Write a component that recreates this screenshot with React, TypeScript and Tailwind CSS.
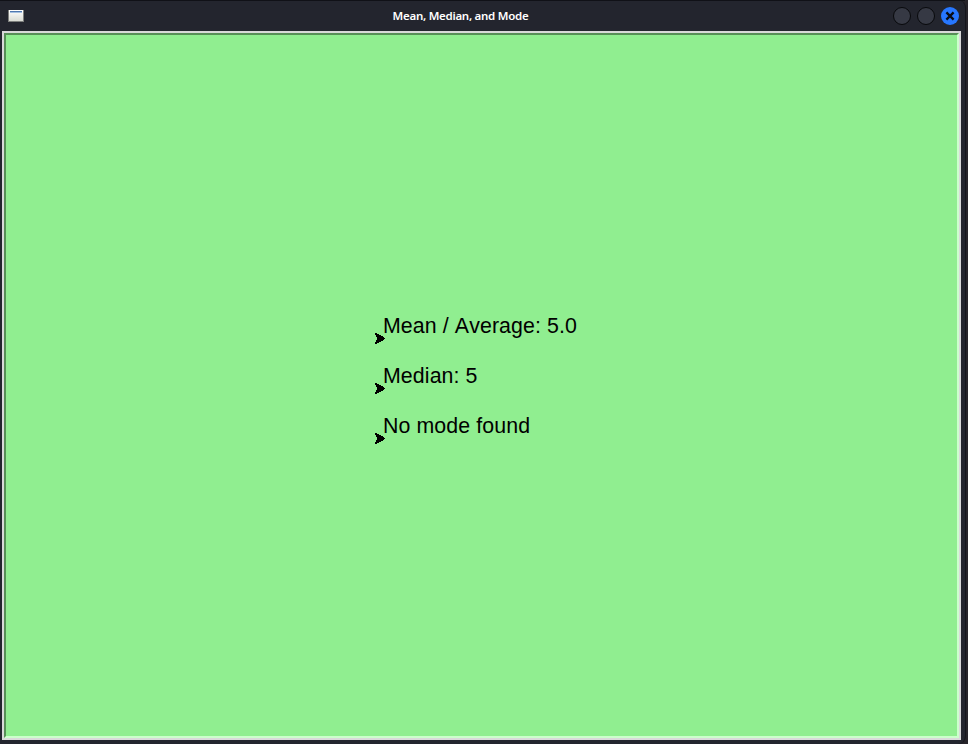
const lines = ["Mean / Average: 5.0", "Median: 5", "No mode found"];

function Turtle() {
  return (
    <svg width="10" height="11" viewBox="0 0 10 11" shapeRendering="crispEdges" className="mt-[20px] shrink-0">
      <path d="M0 0h2v1h2v1h2v1h2v1h1v1h1v1h-1v1h-1v1h-2v1h-2v1h-2v1h-2v-2h1v-2h1v-3h-1v-2h-1z" fill="#000" />
    </svg>
  );
}

function TitleBar() {
  return (
    <header className="flex h-[31px] shrink-0 items-center border-t border-[#101117] pl-2 pr-[6px]">
      <svg width="16" height="14" viewBox="0 0 16 14" shapeRendering="crispEdges" className="shrink-0">
        <defs>
          <linearGradient id="win" x1="0" y1="0" x2="0" y2="1">
            <stop offset="0" stopColor="#ffffff" />
            <stop offset="1" stopColor="#d9dbd3" />
          </linearGradient>
        </defs>
        <path d="M0 1h16v12H0z" fill="#7c7e7c" />
        <path d="M1 1h14v11H1z" fill="url(#win)" />
        <path d="M2 2h12v1H2z" fill="#5078b0" />
        <path d="M2 3h12v1H2z" fill="#a4bfdf" />
      </svg>
      <h1 className="flex-1 pl-[4px] text-center font-['Noto_Sans'] text-[11.5px] leading-[18px] font-semibold tracking-[-0.27px] text-white">
        Mean, Median, and Mode
      </h1>
      <div className="flex gap-[6px]">
        <span className="size-[18px] rounded-full border border-[#08090c] bg-[#363944]" />
        <span className="size-[18px] rounded-full border border-[#08090c] bg-[#363944]" />
        <span className="flex size-[18px] items-center justify-center rounded-full bg-[#2777ff]">
          <svg width="10" height="10" viewBox="0 0 10 10">
            <path d="M1.4 1.4l7.2 7.2M8.6 1.4L1.4 8.6" stroke="#0b0d14" strokeWidth="2.3" />
          </svg>
        </span>
      </div>
    </header>
  );
}

export default function App() {
  return (
    <div className="h-[744px] w-[968px] overflow-hidden bg-[#26242a] pr-[2px]">
      <div className="flex h-full flex-col rounded-r-lg border-r border-[#15161c] bg-[#23252e]">
        <TitleBar />
        <div className="flex min-h-0 flex-1 pr-[4px] pb-1 pl-[2px]">
          <div className="flex flex-1 border-2 border-[#d9d9d9]">
            <main className="flex-1 border-2 border-t-[#578f57] border-r-[#ccffcc] border-b-[#ccffcc] border-l-[#578f57] bg-[#90ee90] pt-[278px] pl-[369px]">
              {lines.map((line) => (
                <div key={line} className="flex h-[50px] items-start">
                  <Turtle />
                  <p className="-ml-[2px] font-['Liberation_Sans',sans-serif] text-[21.33px] leading-[26px] tracking-[0.1px] whitespace-pre text-black [font-kerning:none]">{line}</p>
                </div>
              ))}
            </main>
          </div>
        </div>
      </div>
    </div>
  );
}
